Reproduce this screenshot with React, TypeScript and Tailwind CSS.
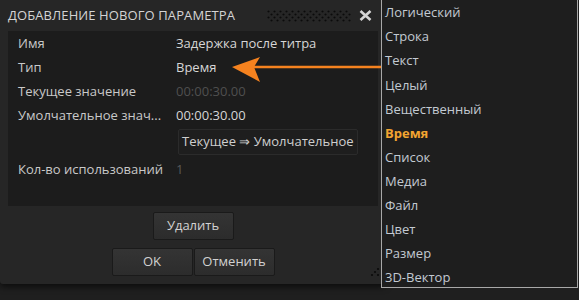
import React from "react";

const FONT = { fontFamily: '"Open Sans", "Noto Sans", sans-serif' };

const types = [
  "Логический",
  "Строка",
  "Текст",
  "Целый",
  "Вещественный",
  "Время",
  "Список",
  "Медиа",
  "Файл",
  "Цвет",
  "Размер",
  "3D-Вектор",
];

function Dots() {
  return (
    <svg width="84" height="12" className="mr-2">
      <defs>
        <pattern id="grip" width="6" height="6" patternUnits="userSpaceOnUse">
          <circle cx="1.5" cy="1.5" r="1.1" fill="#0b0b0b" />
          <circle cx="4.5" cy="4.5" r="1.1" fill="#0b0b0b" />
        </pattern>
      </defs>
      <rect width="84" height="12" fill="url(#grip)" />
    </svg>
  );
}

function Row({ label, children }: { label: string; children: React.ReactNode }) {
  return (
    <div className="flex items-center h-6">
      <div className="w-[158px] text-[#c9c9c9] whitespace-nowrap">{label}</div>
      <div>{children}</div>
    </div>
  );
}

function Btn({ children, className = "" }: { children: React.ReactNode; className?: string }) {
  return (
    <div
      className={`w-[81px] h-[28px] flex items-center justify-center rounded-[2px] border border-[#1a1a1a] bg-gradient-to-b from-[#343434] to-[#2c2c2c] text-[#d2d2d2] ${className}`}
    >
      {children}
    </div>
  );
}

export default function App() {
  return (
    <div className="relative w-[579px] h-[300px] bg-[#1f1f1f] overflow-hidden text-[13px]" style={FONT}>
      {/* Dialog */}
      <div className="w-[386px] h-[284px] bg-[#262626] rounded-b-[3px] shadow-[0_3px_6px_rgba(0,0,0,0.6)] flex flex-col">
        <div className="h-[31px] flex items-center pl-2 pr-[14px]">
          <span className="text-[#d4d4d4] text-[13px] tracking-[0.1px]">ДОБАВЛЕНИЕ НОВОГО ПАРАМЕТРА</span>
          <div className="ml-auto flex items-center">
            <Dots />
            <svg width="13" height="11" viewBox="0 0 13 11">
              <path d="M1.5 1 L11.5 10 M11.5 1 L1.5 10" stroke="#d6d6d6" strokeWidth="2.6" />
            </svg>
          </div>
        </div>

        <div className="mx-2 h-[175px] bg-[#1c1c1c] pl-[10px] pt-[1px]">
          <Row label="Имя">
            <span className="text-[#d6d6d6]">Задержка после титра</span>
          </Row>
          <Row label="Тип">
            <span className="text-[#d6d6d6]">Время</span>
          </Row>
          <Row label="Текущее значение">
            <span className="text-[#4f4f4f]">00:00:30.00</span>
          </Row>
          <Row label="Умолчательное знач...">
            <span className="text-[#d6d6d6]">00:00:30.00</span>
          </Row>
          <div className="flex items-center h-[28px]">
            <div className="w-[160px]" />
            <div className="h-[26px] px-[3px] flex items-center border border-[#2b2b2b] rounded-[2px] bg-[#1e1e1e] text-[#cfcfcf]">
              Текущее ⇒ Умолчательное
            </div>
          </div>
          <div className="flex items-center h-6 mt-[2px]">
            <div className="w-[158px] text-[#c9c9c9]">Кол-во использований</div>
            <span className="text-[#5a5a5a]">1</span>
          </div>
        </div>

        <div className="flex flex-col items-center mt-[6px] gap-[8px]">
          <Btn>Удалить</Btn>
          <div className="flex gap-px">
            <Btn>OK</Btn>
            <Btn>Отменить</Btn>
          </div>
        </div>
      </div>

      {/* resize grip */}
      <svg className="absolute left-[367px] top-[266px]" width="14" height="14">
        <circle cx="11" cy="3" r="1.1" fill="#0b0b0b" />
        <circle cx="8" cy="6" r="1.1" fill="#0b0b0b" />
        <circle cx="11" cy="9" r="1.1" fill="#0b0b0b" />
        <circle cx="5" cy="9" r="1.1" fill="#0b0b0b" />
      </svg>

      {/* Arrow */}
      <svg className="absolute left-[230px] top-[54px]" width="155" height="30">
        <line x1="20" y1="13" x2="152" y2="13" stroke="#f5821f" strokeWidth="2.5" />
        <polygon points="2,13 30,3 24,13 30,28" fill="#f5821f" />
      </svg>

      {/* Dropdown */}
      <div className="absolute left-[381px] top-0 w-[197px] h-[288px] bg-[#1e1e1e] border border-[#a8a8a8] border-t-0 pl-[3px] pt-[1px]">
        {types.map((t) => (
          <div
            key={t}
            className={`h-[24.1px] flex items-center ${t === "Время" ? "text-[#f2a431] font-bold" : "text-[#c3cad2]"}`}
          >
            {t}
          </div>
        ))}
      </div>
    </div>
  );
}
